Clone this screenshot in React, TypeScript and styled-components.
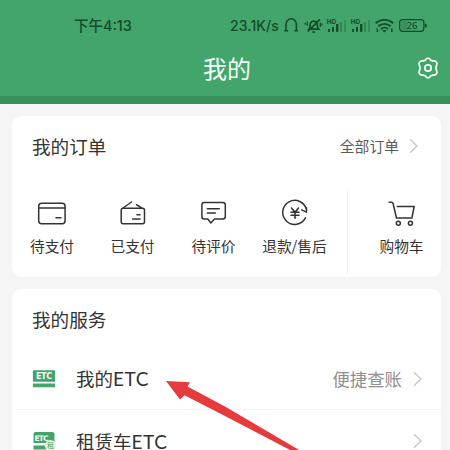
import React from 'react';
import styled, { createGlobalStyle } from 'styled-components';

const GlobalStyle = createGlobalStyle`
  * { box-sizing: border-box; }
  html, body { margin: 0; overflow: hidden; background: #f5f5f5; }
  body { font-family: "Noto Sans CJK SC", sans-serif; color: #333; }
  svg { display: block; flex: none; }
`;

const Screen = styled.div`
  position: relative;
  width: 450px;
  height: 450px;
  overflow: hidden;
  background: #f5f5f5;
`;

const Header = styled.header`
  height: 104px;
  background: #43a56b;
  border-bottom: 8px solid #38915b;
`;

const StatusBar = styled.div`
  height: 48px;
  padding: 3px 22px 0 74px;
  display: flex;
  align-items: center;
  color: #124b29;
  font-size: 14.5px;
  font-weight: 500;
  line-height: 20px;
  white-space: nowrap;
`;

const Speed = styled.span`
  margin-left: auto;
  width: 53px;
  font-family: Inter, sans-serif;
  font-size: 14px;
  letter-spacing: 0.1px;
`;

const Clock = styled.span`
  font-family: Inter, sans-serif;
  font-size: 14.4px;
`;

const TitleBar = styled.div`
  height: 40px;
  display: grid;
  grid-template-columns: 1fr auto 1fr;
  align-items: center;
  padding: 0 10px 0 14px;
  color: #f4fff7;
`;

const Title = styled.h1`
  grid-column: 2;
  margin: 0;
  font-size: 24px;
  line-height: 36px;
  font-weight: 400;
`;

const SettingsButton = styled.span`
  justify-self: end;
`;

const Content = styled.main`
  padding: 12px 9px 0 12px;
  display: flex;
  flex-direction: column;
  gap: 12px;
`;

const Card = styled.section<{ $height: number }>`
  height: ${(p) => p.$height}px;
  flex: none;
  background: #fff;
  border-radius: 9px;
`;

const CardHeader = styled.div`
  height: 59px;
  padding: 0 22px 0 20px;
  display: flex;
  align-items: center;
  justify-content: space-between;
`;

const CardTitle = styled.h2`
  margin: 0;
  font-size: 18.6px;
  line-height: 28px;
  font-weight: 400;
`;

const MoreLink = styled.span`
  display: flex;
  align-items: center;
  gap: 10px;
  color: #5b5b5b;
  font-size: 14.8px;
  line-height: 22px;
`;

const OrderRow = styled.div`
  display: grid;
  grid-template-columns: 80px 81px 81px 81px 106px;
  height: 102px;
`;

const OrderItem = styled.div<{ $divided?: boolean }>`
  display: flex;
  flex-direction: column;
  align-items: center;
  padding-top: ${(p) => (p.$divided ? 9 : 24)}px;
  margin: ${(p) => (p.$divided ? '15px 0 0 12px' : '0')};
  height: ${(p) => (p.$divided ? 85 : 102)}px;
  padding-left: ${(p) => (p.$divided ? 14 : 0)}px;
  border-left: ${(p) => (p.$divided ? '1px solid #f1f1f1' : '0')};
  font-size: 14.7px;
  line-height: 22px;
  white-space: nowrap;

  svg { margin-bottom: 8px; }
`;

const ServiceRow = styled.div<{ $divider?: boolean }>`
  height: 62px;
  margin: 0 0 0 4px;
  padding: 0 18px 0 16px;
  display: flex;
  align-items: center;
  border-bottom: ${(p) => (p.$divider ? '1px solid #f3f3f3' : '0')};
`;

const ServiceName = styled.span`
  margin-left: 20px;
  font-size: 18.5px;
  line-height: 24px;
  white-space: nowrap;
`;

const Latin = styled.span`
  font-family: Lato, sans-serif;
  font-size: 19px;
  letter-spacing: 0.6px;
`;

const ServiceAside = styled.span`
  margin-left: auto;
  display: flex;
  align-items: center;
  gap: 11px;
  color: #8f8f8f;
  font-size: 17.4px;
  line-height: 26px;
`;

const Pointer = styled.svg`
  position: absolute;
  left: 160px;
  top: 374px;
`;

const ChevronIcon = () => (
  <svg width="10" height="16" viewBox="0 0 10 16" fill="none" stroke="#c6c6c6" strokeWidth="1.3">
    <path d="M1 1.2 8 8 1 14.8" />
  </svg>
);

const StatusIconSet = () => (
  <svg width="145" height="20" viewBox="283 16 145 20" fill="none" stroke="#124b29" strokeWidth="1.6">
    <path d="M286 30.500V24.500a5.200 5.700 0 0 1 10.400 0V30.500M284.400 30.700h3.700M294.400 30.700h3.700" />
    <path d="M309 29.200h9.600c-1.600-1.600-1-4-1.700-6a3.500 3.500 0 0 0-6.400 0c-.7 2 .1 4.400-1.500 6ZM312.200 32h3M308 31.500 319.800 19.300" strokeWidth="1.7" />
    <path d="M307.200 21.500v4.500M305.200 22.700v2M320.300 22.500v4.500M322 23.500v2" strokeWidth="1.200" />
    {[0, 24].map((x) => (
      <g key={x} transform={`translate(${x} 0)`} stroke="none" fill="#124b29">
        <text x="326.800" y="24" fontFamily="Liberation Sans" fontWeight="700" fontSize="6.400">HD</text>
        <rect x="328" y="29" width="2" height="2.800" />
        <rect x="332" y="27" width="2" height="4.800" />
        <rect x="336" y="24" width="2.400" height="7.800" />
        <rect x="340" y="22" width="2" height="9.800" opacity=".35" />
        <rect x="344" y="20" width="2" height="11.800" opacity=".28" />
      </g>
    ))}
    <path d="M375.700 23.300c5-4.600 12.600-4.600 17.400 0M378.300 26.300c3.500-3.300 8.800-3.300 12.200 0M380.900 29c2-1.900 5-1.900 7 0" strokeWidth="1.900" />
    <path d="m382 30 2.400 2.400 2.400-2.400Z" fill="#124b29" stroke="none" />
    <path d="M377.300 28.500v3.500M391.800 28.500v3.500" strokeWidth="1.500" />
    <rect x="399.700" y="19.700" width="24.200" height="11.600" rx="3" strokeWidth="1.200" />
    <rect x="401.300" y="21.300" width="6" height="8.400" rx="1" fill="#124b29" opacity=".22" stroke="none" />
    <path d="M425.800 23.800v3.500" strokeWidth="1.800" />
    <text x="412" y="29.100" textAnchor="middle" fontFamily="Noto Sans" fontSize="9.700" fill="#124b29" stroke="none">26</text>
  </svg>
);

const GearIcon = () => (
  <svg width="24" height="24" viewBox="0 0 24 24" fill="none" stroke="#f4fff7" strokeWidth="1.7" strokeLinejoin="round">
    <path d="M9.800 3.400C11 1.700 13 1.700 14.200 3.400Q15.300 5 17.300 4.900C19.500 4.700 21.600 6.500 20.800 8.600Q19.100 12 20.800 15.400C21.600 17.500 19.500 19.300 17.300 19.100Q15.300 19 14.200 20.600C13 22.300 11 22.300 9.800 20.600Q8.700 19 6.700 19.100C4.500 19.300 2.400 17.500 3.200 15.400Q4.900 12 3.200 8.600C2.400 6.500 4.500 4.700 6.700 4.900Q8.700 5 9.800 3.400Z" />
    <circle cx="12" cy="12" r="3.200" />
  </svg>
);

const iconProps = {
  height: 28,
  fill: 'none',
  stroke: '#333',
  strokeWidth: 1.5,
  strokeLinejoin: 'round' as const,
  strokeLinecap: 'round' as const,
};

const CardIcon = () => (
  <svg width="30" viewBox="0 0 30 28" {...iconProps}>
    <rect x="1.700" y="4.200" width="26.400" height="20.600" rx="3" />
    <path d="M2 9h26M19 18.800h5" />
  </svg>
);

const PaidIcon = () => (
  <svg width="28" viewBox="0 0 28 28" {...iconProps}>
    <rect x="2.200" y="9.200" width="23.300" height="15.600" rx="2" />
    <path d="m4 9 8.500-6M17.500 5.700 22.500 9M18 15.800h3M13.500 20h7.500" />
  </svg>
);

const ReviewIcon = () => (
  <svg width="28" viewBox="0 0 28 28" {...iconProps}>
    <path d="M4.300 3.500h18.500q2.500 0 2.500 2.500v11.500q0 2.500-2.500 2.500H14.500L10.800 24 7.800 20H4.300Q1.900 20 1.900 17.500V6q0-2.500 2.400-2.500ZM7.300 9.800h12M7.300 14h8" />
  </svg>
);

const RefundIcon = () => (
  <svg width="28" viewBox="0 0 28 28" {...iconProps}>
    <path d="M25.500 10.900A12 12 0 1 0 24.400 18.900M20.800 10.900l4.700 2.300V8.700" />
    <path d="m10.500 9 3.500 4.300L17.500 9M10 13.300h8M10 16.300h8M14 13.300v5.900" strokeWidth="1.600" />
  </svg>
);

const CartIcon = () => (
  <svg width="28" viewBox="0 0 28 28" {...iconProps}>
    <path d="M1.200 3.300h2.500q1 0 1.400 1.200L8.500 19h15.400L26.200 7.500H9.300" />
    <circle cx="10.300" cy="24.200" r="2" />
    <circle cx="22.400" cy="24.200" r="2" />
  </svg>
);

const EtcIcon = ({ rental = false }: { rental?: boolean }) => (
  <svg width="24" height="20" viewBox="0 0 24 20">
    {rental ? (
      <>
        <path d="M3.500 1h17q2 0 2 2v9h-21V3q0-2 2-2ZM1.500 14.500h13v4h-13Z" fill="#43a56b" />
        <text x="2.500" y="9.500" textLength="14" fontFamily="DejaVu Sans" fontSize="7.500" fontWeight="700" fill="#e8fff0">ETC</text>
        <circle cx="18.500" cy="14.500" r="5.500" fill="#e8f5ec" />
        <text x="18.500" y="17" textAnchor="middle" fontFamily="Noto Sans CJK SC" fontSize="7" fill="#43a56b">租</text>
      </>
    ) : (
      <>
        <path d="M1.700 1.200h20.600q.8 0 .8.800v10.800H.9V2q0-.8.800-.8ZM.9 14.600h22.200v3.700H.9Z" fill="#43a56b" />
        <text x="4" y="10" textLength="16" fontFamily="DejaVu Sans" fontSize="8" fontWeight="700" fill="#fff">ETC</text>
      </>
    )}
  </svg>
);

const orders = [
  { label: '待支付', Icon: CardIcon },
  { label: '已支付', Icon: PaidIcon },
  { label: '待评价', Icon: ReviewIcon },
  { label: '退款/售后', Icon: RefundIcon },
  { label: '购物车', Icon: CartIcon, divided: true },
];

export default function App() {
  return (
    <>
      <GlobalStyle />
      <Screen>
        <Header>
          <StatusBar>
            <span>下午<Clock>4:13</Clock></span>
            <Speed>23.1K/s</Speed>
            <StatusIconSet />
          </StatusBar>
          <TitleBar>
            <Title>我的</Title>
            <SettingsButton><GearIcon /></SettingsButton>
          </TitleBar>
        </Header>
        <Content>
          <Card $height={161}>
            <CardHeader>
              <CardTitle>我的订单</CardTitle>
              <MoreLink>全部订单<ChevronIcon /></MoreLink>
            </CardHeader>
            <OrderRow>
              {orders.map(({ label, Icon, divided }) => (
                <OrderItem key={label} $divided={divided}>
                  <Icon />
                  <span>{label}</span>
                </OrderItem>
              ))}
            </OrderRow>
          </Card>
          <Card $height={190}>
            <CardHeader>
              <CardTitle>我的服务</CardTitle>
            </CardHeader>
            <ServiceRow $divider>
              <EtcIcon />
              <ServiceName>我的<Latin>ETC</Latin></ServiceName>
              <ServiceAside>便捷查账<ChevronIcon /></ServiceAside>
            </ServiceRow>
            <ServiceRow>
              <EtcIcon rental />
              <ServiceName>租赁车<Latin>ETC</Latin></ServiceName>
              <ServiceAside><ChevronIcon /></ServiceAside>
            </ServiceRow>
          </Card>
        </Content>
        <Pointer width="145" height="76" viewBox="161 374 145 76">
          <path d="M167 381 191 382.300 188.500 386.500 226 406.500 301 450.500H292L226 416 185.500 395.200 181 399.500Z" fill="#e53b3c" />
        </Pointer>
      </Screen>
    </>
  );
}
